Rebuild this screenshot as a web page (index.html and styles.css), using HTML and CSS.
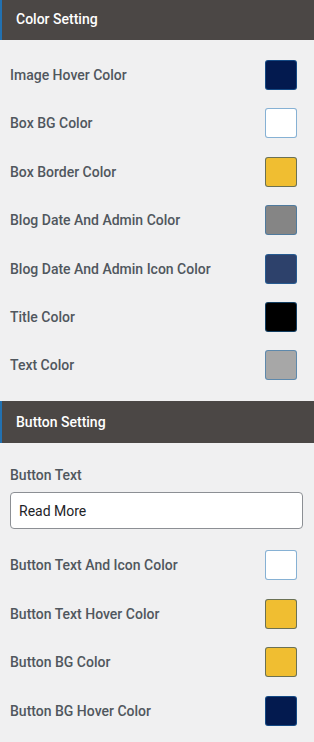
FILE: index.html
```html
<!DOCTYPE html>
<html lang="en">
<head>
    <meta charset="UTF-8">
    <meta name="viewport" content="width=device-width, initial-scale=1.0">
    <title>Settings</title>
    <link rel="stylesheet" href="styles.css">
</head>
<body>
<div class="panel">
    <!-- Color setting -->
    <div class="section-head first">Color Setting</div>
    <div class="row">
        <span class="label">Image Hover Color</span>
        <span class="swatch navy"></span>
    </div>
    <div class="row">
        <span class="label">Box BG Color</span>
        <span class="swatch white"></span>
    </div>
    <div class="row">
        <span class="label">Box Border Color</span>
        <span class="swatch yellow"></span>
    </div>
    <div class="row">
        <span class="label">Blog Date And Admin Color</span>
        <span class="swatch gray"></span>
    </div>
    <div class="row">
        <span class="label">Blog Date And Admin Icon Color</span>
        <span class="swatch slate"></span>
    </div>
    <div class="row">
        <span class="label">Title Color</span>
        <span class="swatch black"></span>
    </div>
    <div class="row">
        <span class="label">Text Color</span>
        <span class="swatch silver"></span>
    </div>

    <!-- Button setting -->
    <div class="section-head">Button Setting</div>
    <div class="field">
        <label class="label" for="btnText">Button Text</label>
        <input class="text-input" id="btnText" type="text" value="Read More">
    </div>
    <div class="row">
        <span class="label">Button Text And Icon Color</span>
        <span class="swatch white"></span>
    </div>
    <div class="row">
        <span class="label">Button Text Hover Color</span>
        <span class="swatch yellow"></span>
    </div>
    <div class="row">
        <span class="label">Button BG Color</span>
        <span class="swatch yellow"></span>
    </div>
    <div class="row">
        <span class="label">Button BG Hover Color</span>
        <span class="swatch navy"></span>
    </div>
</div>
</body>
</html>
```

FILE: styles.css
```css
body {
    margin: 0;
    padding: 0;
    background-color: #f0f0f1;
    font-family: Roboto, "Liberation Sans", sans-serif;
}
.panel {
    width: 314px;
    padding-bottom: 20px;
}
.section-head {
    height: 42px;
    box-sizing: border-box;
    display: flex;
    align-items: center;
    padding-left: 14px;
    background-color: #4b4745;
    border-left: 2px solid #2271b1;
    color: #fff;
    font-size: 14px;
    font-weight: 500;
    margin-top: 21px;
}
.section-head.first {
    margin-top: -2px;
}
.row {
    display: flex;
    align-items: center;
    justify-content: space-between;
    height: 30px;
    padding: 0 17px 0 10px;
    margin-top: 18.4px;
}
.section-head.first + .row {
    margin-top: 20px;
}
.label {
    font-size: 14px;
    font-weight: 500;
    color: #50575e;
}
.swatch {
    width: 32px;
    height: 30px;
    box-sizing: border-box;
    border: 1px solid rgba(34, 113, 177, 0.55);
    border-radius: 3px;
}
.navy { background-color: #031a4f; }
.white { background-color: #fff; }
.yellow { background-color: #f0be31; border-color: rgba(50, 80, 100, 0.7); }
.gray { background-color: #858585; }
.slate { background-color: #2d416b; }
.black { background-color: #000; }
.silver { background-color: #a7a7a7; }
.field {
    padding: 0 11px 0 10px;
    margin-top: 24px;
}
.field .label {
    display: block;
    margin-bottom: 9px;
}
.text-input {
    display: block;
    width: 100%;
    box-sizing: border-box;
    height: 37px;
    padding: 0 8px;
    border: 1px solid #8c8f94;
    border-radius: 4px;
    background-color: #fff;
    font-family: Roboto, "Liberation Sans", sans-serif;
    font-size: 14px;
    color: #1d2327;
}
.field + .row {
    margin-top: 21px;
}
```
